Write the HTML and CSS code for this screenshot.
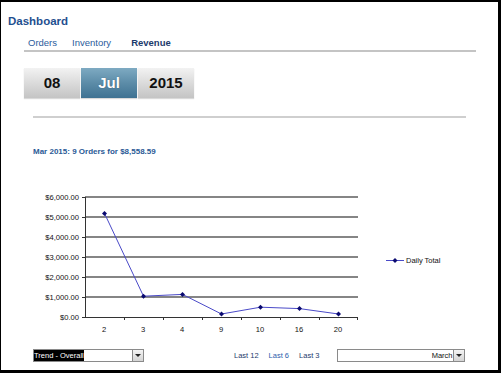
FILE: index.html
```html
<!DOCTYPE html>
<html lang="en">
<head>
  <meta charset="UTF-8">
  <title>Dashboard</title>
  <link rel="stylesheet" href="styles.css">
</head>
<body>
  <div class="frame">
    <h1 class="title">Dashboard</h1>

    <div class="nav">
      <a class="nav-link">Orders</a>
      <a class="nav-link">Inventory</a>
      <a class="nav-link active">Revenue</a>
    </div>

    <div class="date-picker">
      <div class="date-cell">08</div>
      <div class="date-cell selected">Jul</div>
      <div class="date-cell">2015</div>
    </div>

    <div class="divider"></div>

    <p class="chart-title">Mar 2015: 9 Orders for $8,558.59</p>

    <svg class="chart" width="433" height="150" viewBox="0 0 433 150">
      <g stroke="#858585" stroke-width="2">
        <line x1="52" y1="12" x2="325" y2="12"/>
        <line x1="52" y1="32" x2="325" y2="32"/>
        <line x1="52" y1="52" x2="325" y2="52"/>
        <line x1="52" y1="72" x2="325" y2="72"/>
        <line x1="52" y1="92" x2="325" y2="92"/>
        <line x1="52" y1="112" x2="325" y2="112"/>
      </g>
      <g stroke="#333" stroke-width="1">
        <line x1="52.5" y1="12" x2="52.5" y2="132"/>
        <line x1="52" y1="132.5" x2="325" y2="132.5"/>
        <line x1="49" y1="12.5" x2="52" y2="12.5"/>
        <line x1="49" y1="32.5" x2="52" y2="32.5"/>
        <line x1="49" y1="52.5" x2="52" y2="52.5"/>
        <line x1="49" y1="72.5" x2="52" y2="72.5"/>
        <line x1="49" y1="92.5" x2="52" y2="92.5"/>
        <line x1="49" y1="112.5" x2="52" y2="112.5"/>
        <line x1="49" y1="132.5" x2="52" y2="132.5"/>
        <line x1="91.5" y1="132" x2="91.5" y2="135"/>
        <line x1="130.5" y1="132" x2="130.5" y2="135"/>
        <line x1="169.5" y1="132" x2="169.5" y2="135"/>
        <line x1="208.5" y1="132" x2="208.5" y2="135"/>
        <line x1="247.5" y1="132" x2="247.5" y2="135"/>
        <line x1="286.5" y1="132" x2="286.5" y2="135"/>
        <line x1="324.5" y1="132" x2="324.5" y2="135"/>
      </g>
      <g class="axis-label" text-anchor="end">
        <text x="46" y="14.7">$6,000.00</text>
        <text x="46" y="34.7">$5,000.00</text>
        <text x="46" y="54.7">$4,000.00</text>
        <text x="46" y="74.7">$3,000.00</text>
        <text x="46" y="94.7">$2,000.00</text>
        <text x="46" y="114.7">$1,000.00</text>
        <text x="46" y="134.7">$0.00</text>
      </g>
      <g class="axis-label" text-anchor="middle">
        <text x="71" y="146.5">2</text>
        <text x="110" y="146.5">3</text>
        <text x="149" y="146.5">4</text>
        <text x="188" y="146.5">9</text>
        <text x="227" y="146.5">10</text>
        <text x="266" y="146.5">16</text>
        <text x="305" y="146.5">20</text>
      </g>
      <polyline fill="none" stroke="#4a4ac8" stroke-width="1"
        points="71.5,28.4 110.5,111.2 149.5,109.4 188.5,129 227.5,122.2 266.5,123.6 305.5,129"/>
      <g fill="#0a0a70">
        <path d="M71.5 25.9 L74 28.4 L71.5 30.9 L69 28.4 Z"/>
        <path d="M110.5 108.7 L113 111.2 L110.5 113.7 L108 111.2 Z"/>
        <path d="M149.5 106.9 L152 109.4 L149.5 111.9 L147 109.4 Z"/>
        <path d="M188.5 126.5 L191 129 L188.5 131.5 L186 129 Z"/>
        <path d="M227.5 119.7 L230 122.2 L227.5 124.7 L225 122.2 Z"/>
        <path d="M266.5 121.1 L269 123.6 L266.5 126.1 L264 123.6 Z"/>
        <path d="M305.5 126.5 L308 129 L305.5 131.5 L303 129 Z"/>
      </g>
      <line x1="353" y1="75.5" x2="371" y2="75.5" stroke="#4a4ac8" stroke-width="1"/>
      <path d="M362 73 L364.5 75.5 L362 78 L359.5 75.5 Z" fill="#0a0a70"/>
      <text class="legend-label" x="373" y="78">Daily Total</text>
    </svg>

    <div class="controls">
      <div class="dropdown trend">
        <span class="dropdown-value"><span class="highlighted">Trend - Overall</span></span>
        <span class="dropdown-button"></span>
      </div>
      <div class="range-links">
        <a class="range-link">Last 12</a>
        <a class="range-link current">Last 6</a>
        <a class="range-link">Last 3</a>
      </div>
      <div class="dropdown month">
        <span class="dropdown-value right">March</span>
        <span class="dropdown-button"></span>
      </div>
    </div>
  </div>
</body>
</html>
```

FILE: styles.css
```css
body {
  margin: 0;
  font-family: 'Liberation Sans', Arial, sans-serif;
  background-color: #fff;
}

.frame {
  box-sizing: border-box;
  width: 501px;
  height: 373px;
  border-style: solid;
  border-color: #000;
  border-width: 2px 3px 3px 1px;
  padding: 13px 0 0 0;
  overflow: hidden;
}

.title {
  margin: 0 0 0 7px;
  font-size: 11.5px;
  line-height: 12px;
  font-weight: bold;
  color: #1f4f8f;
}

.nav {
  display: flex;
  margin: 10px 0 0 23px;
  width: 452px;
  padding: 0 0 2px 4px;
  box-sizing: border-box;
  border-bottom: 2px solid #c4c4c4;
}

.nav-link {
  font-size: 9.5px;
  line-height: 11px;
  color: #2b5c9c;
  margin-right: 15px;
}

.nav-link.active {
  margin-left: 5px;
  font-weight: bold;
  color: #1c3a6c;
}

.date-picker {
  display: flex;
  gap: 1px;
  margin: 16px 0 0 23px;
}

.date-cell {
  width: 56px;
  height: 30px;
  line-height: 30px;
  text-align: center;
  font-size: 15px;
  font-weight: bold;
  color: #111;
  background: linear-gradient(#f2f2f2, #d2d2d2 70%, #c4c4c4);
  box-shadow: 0 1px 1px rgba(0, 0, 0, 0.15);
}

.date-cell.selected {
  color: #fff;
  background: linear-gradient(#7eaac2, #5c8ca8 50%, #3f7292);
  text-shadow: 0 0 1px rgba(0, 0, 0, 0.4);
}

.divider {
  margin: 18px 0 0 32px;
  width: 433px;
  height: 2px;
  background-color: #cfcfcf;
}

.chart-title {
  margin: 29px 0 0 32px;
  font-size: 8px;
  line-height: 10px;
  font-weight: bold;
  color: #2a5a96;
}

.chart {
  display: block;
  margin: 28px 0 0 32px;
}

.axis-label {
  font-family: 'Liberation Sans', Arial, sans-serif;
  font-size: 7.6px;
  fill: #111;
}

.legend-label {
  font-family: 'Liberation Sans', Arial, sans-serif;
  font-size: 7.5px;
  fill: #111;
}

.controls {
  display: flex;
  align-items: center;
  margin: 14px 0 0 32px;
}

.dropdown {
  display: flex;
  box-sizing: border-box;
  height: 13px;
  border: 1px solid #8a8a8a;
  background-color: #fff;
}

.dropdown.trend {
  width: 111px;
}

.dropdown.month {
  width: 128px;
  margin-left: 18px;
}

.dropdown-value {
  flex: 1;
  font-size: 7.5px;
  line-height: 11px;
  color: #111;
  white-space: nowrap;
}

.highlighted {
  display: inline-block;
  background-color: #000;
  color: #fff;
}

.dropdown-value.right {
  text-align: right;
  padding-right: 1px;
}

.dropdown-button {
  position: relative;
  width: 10px;
  border-left: 1px solid #8a8a8a;
  background: linear-gradient(#f4f4f4, #d4d4d4);
}

.dropdown-button::after {
  content: "";
  position: absolute;
  left: 2px;
  top: 4px;
  border-left: 3px solid transparent;
  border-right: 3px solid transparent;
  border-top: 3px solid #222;
}

.range-links {
  display: flex;
  gap: 10px;
  margin-left: 90px;
}

.range-link {
  font-size: 7.5px;
  line-height: 11px;
  color: #1c3a6c;
}

.range-link.current {
  color: #2b5cac;
}
```
